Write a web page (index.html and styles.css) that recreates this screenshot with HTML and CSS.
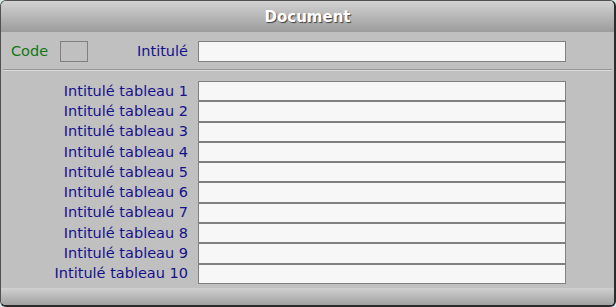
FILE: index.html
```html
<!DOCTYPE html>
<html>
<head>
  <meta charset="utf-8">
  <title>Document</title>
  <link rel="stylesheet" href="styles.css">
</head>
<body>
  <div class="window">
    <div class="titlebar">Document</div>

    <div class="content">
      <div class="form-grid top-row">
        <div class="label-cell">
          <span class="code-label">Code</span>
          <span class="code-box"></span>
          <span class="field-label">Intitulé</span>
        </div>
        <div class="field"></div>
      </div>

      <div class="separator"></div>

      <div class="form-grid tables">
        <div class="field-label">Intitulé tableau 1</div>
        <div class="field"></div>
        <div class="field-label">Intitulé tableau 2</div>
        <div class="field"></div>
        <div class="field-label">Intitulé tableau 3</div>
        <div class="field"></div>
        <div class="field-label">Intitulé tableau 4</div>
        <div class="field"></div>
        <div class="field-label">Intitulé tableau 5</div>
        <div class="field"></div>
        <div class="field-label">Intitulé tableau 6</div>
        <div class="field"></div>
        <div class="field-label">Intitulé tableau 7</div>
        <div class="field"></div>
        <div class="field-label">Intitulé tableau 8</div>
        <div class="field"></div>
        <div class="field-label">Intitulé tableau 9</div>
        <div class="field"></div>
        <div class="field-label">Intitulé tableau 10</div>
        <div class="field"></div>
      </div>
    </div>

    <div class="footer"></div>
  </div>
</body>
</html>
```

FILE: styles.css
```css
* {
  margin: 0;
  padding: 0;
  box-sizing: border-box;
}

body {
  background: #d6ecec;
  font-family: "DejaVu Sans", Verdana, sans-serif;
  font-size: 14.5px;
}

.window {
  width: 616px;
  height: 307px;
  display: flex;
  flex-direction: column;
  background: #c0c0c0;
  border: 1px solid #505050;
  border-right: 2px solid #2c2c2c;
  border-bottom: 2px solid #2c2c2c;
  border-radius: 6px;
  overflow: hidden;
}

/* Titre */
.titlebar {
  height: 31px;
  flex-shrink: 0;
  display: flex;
  align-items: center;
  justify-content: center;
  padding-top: 1px;
  background: linear-gradient(#d2d2d2, #9c9c9c);
  color: #fff;
  font-weight: bold;
  font-size: 15px;
  text-shadow: 1px 1px 1px #404040;
}

.content {
  flex: 1;
  padding-top: 9px;
}

.form-grid {
  display: grid;
  grid-template-columns: 187px 368px;
  column-gap: 10px;
}

.label-cell {
  display: flex;
  align-items: center;
}

.code-label {
  color: #107810;
  margin-left: 10px;
  width: 49px;
  padding-bottom: 1px;
}

.code-box {
  width: 28px;
  height: 21px;
  border: 1px solid #808080;
}

.field-label {
  color: #16108a;
  text-align: right;
  margin-left: auto;
  display: flex;
  align-items: center;
  justify-content: flex-end;
  padding-bottom: 1px;
}

.field {
  height: 21px;
  background: #f7f7f7;
  border: 1px solid #808080;
}

.separator {
  margin: 7px 2px 10px 2px;
  height: 2px;
  border-top: 1px solid #989898;
  border-bottom: 1px solid #dadada;
}

.tables {
  grid-auto-rows: 20.3px;
}

.tables .field {
  height: 100%;
}

/* Pied */
.footer {
  height: 17px;
  flex-shrink: 0;
  background: linear-gradient(#d0d0d0, #a2a2a2);
}
```
